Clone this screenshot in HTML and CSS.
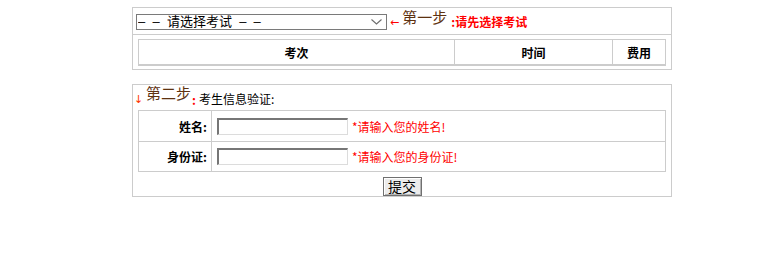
FILE: index.html
```html
<!DOCTYPE html>
<html lang="zh-CN">

<head>
    <meta charset="UTF-8">
    <title>考生信息验证</title>
    <link rel="stylesheet" href="styles.css">
</head>

<body>
    <div class="page">
        <!-- 第一步：选择考试 -->
        <div class="box">
            <div class="step-row">
                <div class="select-wrap">
                    <select class="exam-select">
                        <option>–&nbsp;&nbsp;–&nbsp;&nbsp;请选择考试&nbsp;&nbsp;–&nbsp;&nbsp;–</option>
                    </select>
                    <svg class="chevron" width="11" height="6" viewBox="0 0 11 6">
                        <path d="M0.5 0.5 L5.5 5 L10.5 0.5" fill="none" stroke="#6d6d6d" stroke-width="1.1" />
                    </svg>
                </div>
                <span class="arrow-left">←</span>
                <span class="step-title">第一步</span>
                <span class="hint-bold">:请先选择考试</span>
            </div>
            <div class="list-row">
                <div class="exam-head">
                    <div class="head-cell col-name">考次</div>
                    <div class="head-cell col-time">时间</div>
                    <div class="head-cell col-fee">费用</div>
                </div>
            </div>
        </div>

        <!-- 第二步：考生信息 -->
        <div class="box box-second">
            <div class="step-head">
                <span class="arrow-down">↓</span>
                <span class="step-title">第二步</span>
                <span class="colon-red">:</span>
                <span class="step-sub">考生信息验证:</span>
            </div>
            <div class="form-table">
                <div class="form-row">
                    <div class="form-label">姓名:</div>
                    <div class="form-field">
                        <input type="text" class="text-input">
                        <span class="tip">*请输入您的姓名!</span>
                    </div>
                </div>
                <div class="form-row row-id">
                    <div class="form-label">身份证:</div>
                    <div class="form-field">
                        <input type="text" class="text-input">
                        <span class="tip">*请输入您的身份证!</span>
                    </div>
                </div>
            </div>
            <div class="submit-row">
                <button class="submit-btn">提交</button>
            </div>
        </div>
    </div>
</body>

</html>
```

FILE: styles.css
```css
body {
    margin: 0;
    padding: 0;
    background-color: #ffffff;
    font-family: "Noto Sans CJK SC", "Liberation Sans", sans-serif;
    font-size: 12px;
    color: #000000;
}

.page {
    padding: 7px 0 0 132px;
}

.box {
    width: 540px;
    box-sizing: border-box;
    border: 1px solid #cccccc;
}

.box-second {
    margin-top: 14px;
}

/* 第一行 */
.step-row {
    height: 26px;
    border-bottom: 1px solid #cccccc;
    display: flex;
    align-items: flex-start;
    padding-left: 3px;
}

.select-wrap {
    position: relative;
    margin-top: 6px;
}

.exam-select {
    appearance: none;
    -webkit-appearance: none;
    width: 251px;
    height: 16px;
    box-sizing: border-box;
    border: 1px solid #7a7a7a;
    border-radius: 0;
    background-color: #ffffff;
    font-family: "Liberation Sans", "Noto Sans CJK SC", sans-serif;
    font-size: 13px;
    line-height: 14px;
    padding: 0 0 0 1px;
    color: #000000;
    display: block;
}

.chevron {
    position: absolute;
    right: 5px;
    top: 5px;
}

.arrow-left {
    color: #ff0000;
    font-family: "DejaVu Sans", sans-serif;
    font-size: 11px;
    line-height: 12px;
    margin: 9px 0 0 3px;
}

.step-title {
    color: #5e3210;
    font-size: 15px;
    line-height: 16px;
    margin-top: 1px;
    margin-left: 3px;
}

.hint-bold {
    color: #ff0000;
    font-weight: bold;
    line-height: 12px;
    margin: 8px 0 0 4px;
}

/* 考次表头 */
.list-row {
    padding: 4px 5px 3px;
}

.exam-head {
    display: flex;
    border: 1px solid #cccccc;
    border-bottom-width: 2px;
    height: 27px;
    box-sizing: border-box;
}

.head-cell {
    font-weight: bold;
    display: flex;
    align-items: center;
    justify-content: center;
}

.col-name {
    width: 315px;
}

.col-time {
    width: 157px;
    border-left: 1px solid #cccccc;
}

.col-fee {
    width: 52px;
    border-left: 1px solid #cccccc;
}

/* 第二步 */
.step-head {
    height: 25px;
    display: flex;
    align-items: flex-start;
    padding-left: 1px;
}

.arrow-down {
    color: #ff3300;
    font-family: "DejaVu Sans", sans-serif;
    font-size: 11px;
    line-height: 12px;
    margin-top: 9px;
    width: 10px;
}

.step-head .step-title {
    margin-left: 2px;
    margin-top: 0;
}

.colon-red {
    color: #ff0000;
    font-weight: bold;
    line-height: 12px;
    margin: 9px 0 0 1px;
}

.step-sub {
    line-height: 12px;
    margin: 8px 0 0 3px;
}

.form-table {
    margin: 0 5px;
    border: 1px solid #cccccc;
}

.form-row {
    display: flex;
    height: 30px;
}

.row-id {
    border-top: 1px solid #cccccc;
    height: 29px;
}

.form-label {
    width: 73px;
    border-right: 1px solid #cccccc;
    font-weight: bold;
    display: flex;
    align-items: center;
    justify-content: flex-end;
    padding-right: 4px;
    box-sizing: border-box;
}

.form-field {
    display: flex;
    align-items: center;
    padding-left: 5px;
}

.text-input {
    width: 131px;
    height: 17px;
    box-sizing: border-box;
    margin: 0;
    padding: 0 2px;
    border-top: 2px solid #767676;
    border-left: 2px solid #767676;
    border-right: 1px solid #dcdcdc;
    border-bottom: 1px solid #dcdcdc;
    font-size: 12px;
}

.tip {
    color: #ff0000;
    margin-left: 4px;
}

.submit-row {
    display: flex;
    justify-content: center;
    padding-top: 5px;
}

.submit-btn {
    width: 39px;
    height: 19px;
    box-sizing: border-box;
    padding: 0;
    border: 1px solid #707070;
    background-color: #ececec;
    box-shadow: inset 1px 1px 0 #ffffff, inset -1px -1px 0 #b4b4b4;
    font-family: "Noto Sans CJK SC", sans-serif;
    font-size: 14px;
    line-height: 15px;
    color: #000000;
}
```
